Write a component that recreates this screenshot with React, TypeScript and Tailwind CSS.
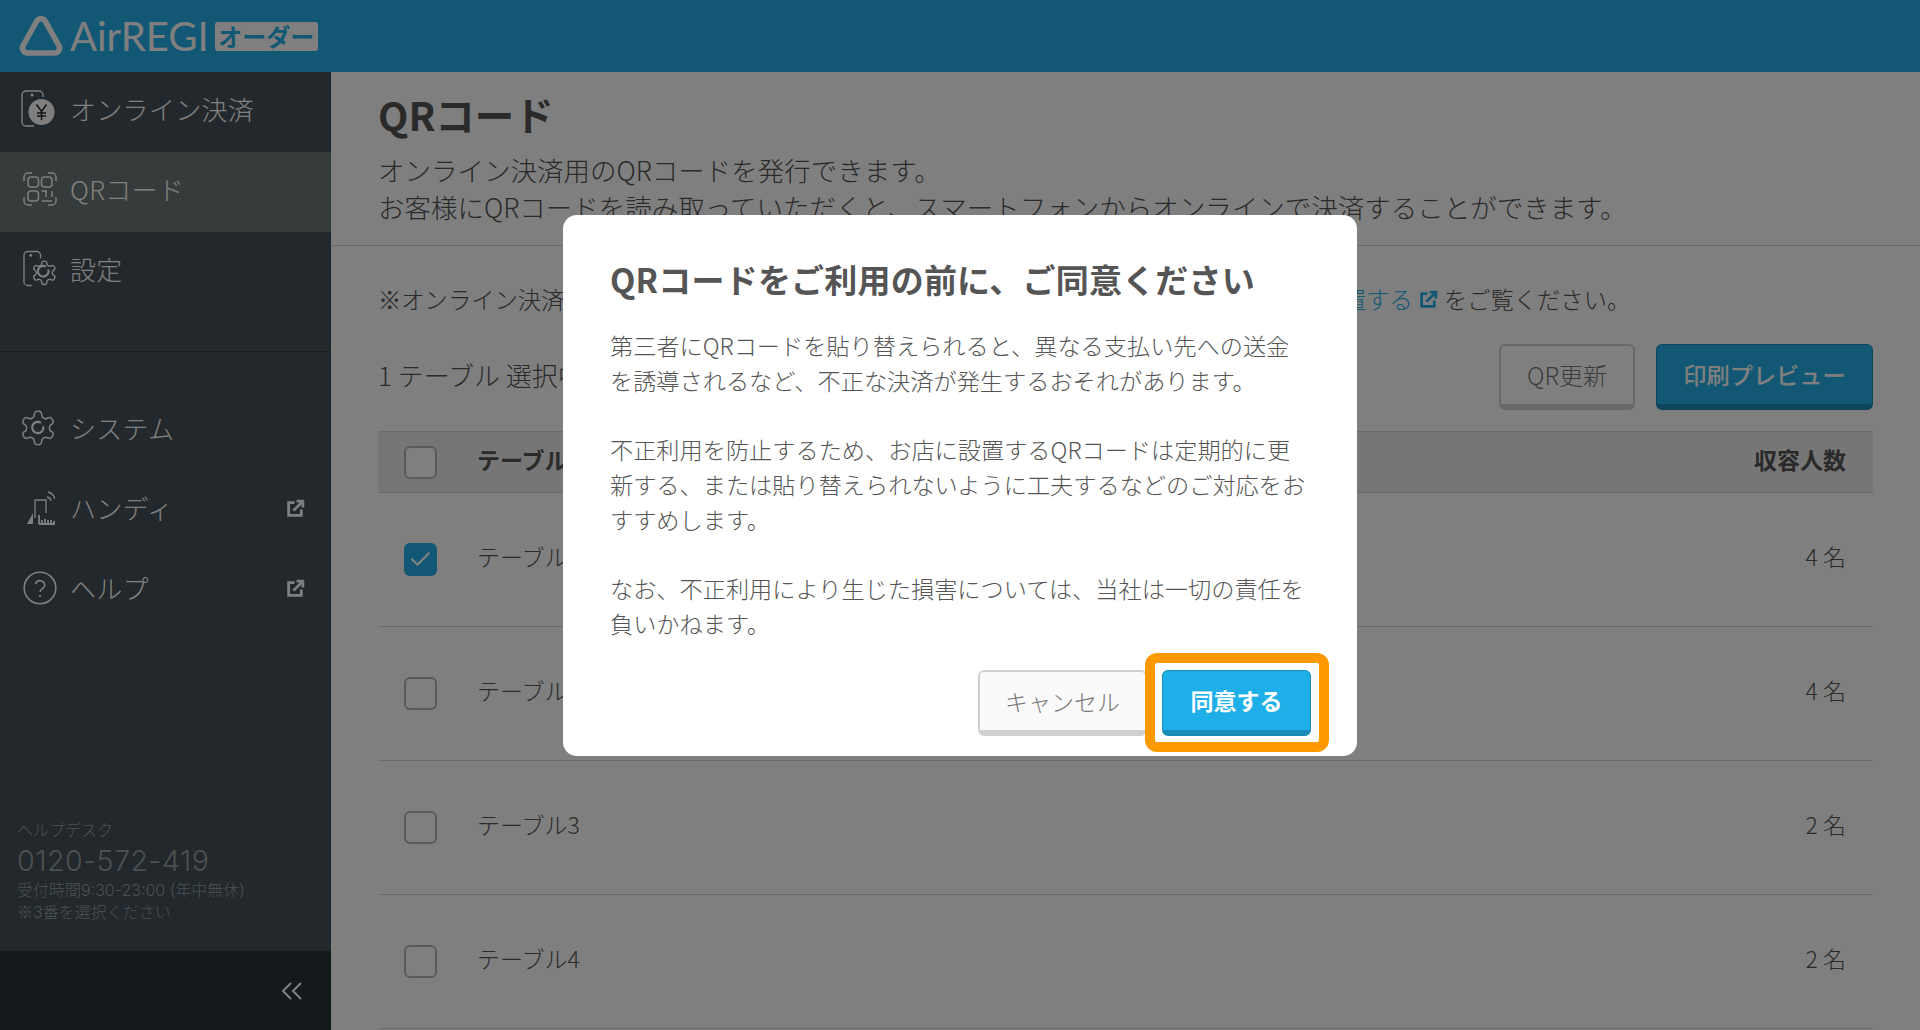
import React from "react";
import { Check } from "lucide-react";

const FONT = "font-['Noto_Sans_CJK_JP','Noto_Sans',sans-serif]";
const GEAR =
  "M12.22 2h-.44a2 2 0 0 0-2 2v.18a2 2 0 0 1-1 1.73l-.43.25a2 2 0 0 1-2 0l-.15-.08a2 2 0 0 0-2.73.73l-.22.38a2 2 0 0 0 .73 2.73l.15.1a2 2 0 0 1 1 1.72v.51a2 2 0 0 1-1 1.74l-.15.09a2 2 0 0 0-.73 2.73l.22.38a2 2 0 0 0 2.73.73l.15-.08a2 2 0 0 1 2 0l.43.25a2 2 0 0 1 1 1.73V20a2 2 0 0 0 2 2h.44a2 2 0 0 0 2-2v-.18a2 2 0 0 1 1-1.73l.43-.25a2 2 0 0 1 2 0l.15.08a2 2 0 0 0 2.73-.73l.22-.39a2 2 0 0 0-.73-2.73l-.15-.08a2 2 0 0 1-1-1.74v-.5a2 2 0 0 1 1-1.74l.15-.09a2 2 0 0 0 .73-2.73l-.22-.38a2 2 0 0 0-2.73-.73l-.15.08a2 2 0 0 1-2 0l-.43-.25a2 2 0 0 1-1-1.73V4a2 2 0 0 0-2-2z";

function Ext({ className = "" }: { className?: string }) {
  return (
    <svg viewBox="0 0 18 18" className={className} fill="none" stroke="currentColor" strokeWidth="2.6">
      <path d="M8 3.5H2.5v12h12V10" />
      <path d="M7 11 15 3" />
      <path d="M10 2h6v6" />
    </svg>
  );
}

function PhoneYen() {
  return (
    <svg viewBox="0 0 36 38" className="w-[36px] h-[38px]" fill="none" stroke="currentColor" strokeWidth="1.4">
      <path d="M14 36H6a4 4 0 0 1-4-4V5a4 4 0 0 1 4-4h13a4 4 0 0 1 4 4v2" />
      <circle cx="12" cy="5" r="0.8" fill="currentColor" />
      <circle cx="21.5" cy="22" r="13" fill="currentColor" stroke="none" />
      <path d="M16.5 14.5l5 7 5-7M21.5 21.5V30M17 23h9M17 26h9" stroke="#22282b" strokeWidth="1.5" />
    </svg>
  );
}

function QrIcon() {
  return (
    <svg viewBox="0 0 34 34" className="ml-[3px] w-[34px] h-[34px]" fill="none" stroke="currentColor" strokeWidth="1.5">
      <path d="M1 9V5a4 4 0 0 1 4-4h4M25 1h4a4 4 0 0 1 4 4v4M33 25v4a4 4 0 0 1-4 4h-4M9 33H5a4 4 0 0 1-4-4v-4" />
      <rect x="5" y="5" width="10.5" height="10" rx="3" />
      <rect x="18.5" y="5" width="10.5" height="10" rx="3" />
      <rect x="5" y="19" width="10.5" height="10" rx="3" />
      <path d="M18.5 19h4.5v6M29 19v6M18.5 29H29" />
    </svg>
  );
}

function PhoneGear() {
  return (
    <svg viewBox="0 0 36 38" className="ml-[3px] w-[36px] h-[38px]" fill="none" stroke="currentColor" strokeWidth="1.4">
      <path d="M9 36H5a4 4 0 0 1-4-4V5a4 4 0 0 1 4-4h9a4 4 0 0 1 4 4v3" />
      <circle cx="8" cy="5" r="0.8" fill="currentColor" />
      <path d={GEAR} transform="translate(7.5 8.5) scale(1.2)" strokeWidth="1.2" />
      <path d="M26 19.5a5.5 5.5 0 1 1-2.5-3" strokeWidth="2.2" />
    </svg>
  );
}

function GearIcon() {
  return (
    <svg viewBox="0 0 24 24" className="ml-[-2px] w-[40px] h-[40px]" fill="none" stroke="currentColor" strokeWidth="0.9">
      <path d={GEAR} />
      <path d="M15.2 11a3.4 3.4 0 1 1-1.4-2.1" strokeWidth="1.3" />
    </svg>
  );
}

function Handy() {
  return (
    <svg viewBox="0 0 28 34" className="ml-[7px] w-[28px] h-[34px]" fill="none" stroke="currentColor" strokeWidth="1.3">
      <path d="M0 33l6-11v11z" fill="currentColor" stroke="none" />
      <path d="M8 27V9h11v13" />
      <path d="M12 33V24M12 33h16M15 33v-4M18 33v-5M21 33v-4M24 33v-4M27 33v-3" strokeWidth="1.8" />
      <path d="M20 6a5 5 0 0 1 4 4M21 1a10 10 0 0 1 7 7" />
    </svg>
  );
}

function HelpIcon() {
  return (
    <svg viewBox="0 0 34 34" className="ml-[3px] w-[34px] h-[34px]" fill="none" stroke="currentColor" strokeWidth="1.6">
      <circle cx="17" cy="17" r="15.8" />
      <path d="M12.5 13a4.7 4.7 0 0 1 9.2 1.2c0 3.2-4.7 3.5-4.7 6.8" />
      <circle cx="17" cy="25.2" r="1.1" fill="currentColor" stroke="none" />
    </svg>
  );
}

function NavItem({ icon, label, active, ext }: { icon: React.ReactNode; label: string; active?: boolean; ext?: boolean }) {
  return (
    <div className={`flex items-center h-[80px] pl-[20px] pr-[26px] pb-[6px] ${active ? "bg-[#6c7878]" : ""}`}>
      <div className="w-[38px] flex justify-start shrink-0">{icon}</div>
      <span className="ml-[12px] text-[26px] font-light leading-none tracking-[0.3px] flex-1">{label}</span>
      {ext && <Ext className="w-[19px] h-[19px]" />}
    </div>
  );
}

function Box({ checked }: { checked?: boolean }) {
  return checked ? (
    <div className="w-[33px] h-[33px] rounded-[6px] bg-[#24b0e9] flex items-center justify-center text-white shrink-0">
      <Check size={25} strokeWidth={2.2} />
    </div>
  ) : (
    <div className="w-[33px] h-[33px] rounded-[6px] border-2 border-[#b4b4b4] bg-white shrink-0" />
  );
}

function Row({ name, n, checked }: { name: string; n: string; checked?: boolean }) {
  return (
    <div className="flex items-center h-[134px] border-b border-[#d4d4d4] pl-[26px] pr-[27px]">
      <Box checked={checked} />
      <span className="ml-[40px] text-[23px] pb-[6px] flex-1 font-light text-[#555]">{name}</span>
      <span className="text-[23px] pb-[6px] font-light text-[#555]">{n}</span>
    </div>
  );
}

export default function App() {
  return (
    <div className={`relative h-[1030px] w-[1920px] overflow-hidden bg-white flex flex-col ${FONT}`}>
      <header className="h-[72px] shrink-0 bg-[#24b0e9] flex items-center pl-[19px] text-white">
        <svg viewBox="0 0 44 40" className="w-[44px] h-[40px]" fill="none" stroke="currentColor" strokeWidth="5.6" strokeLinejoin="round">
          <path d="M17.5 5.5a5.2 5.2 0 0 1 9 0L39.5 29a5 5 0 0 1-4.4 8H8.9a5 5 0 0 1-4.4-8z" />
        </svg>
        <span className="ml-[7px] font-['Lato',sans-serif] text-[40px] leading-none">AirREGI</span>
        <span className="ml-[6px] w-[103px] h-[29px] rounded-[3px] bg-white text-[#24b0e9] font-bold text-[24px] leading-none flex items-center justify-center">オーダー</span>
      </header>
      <div className="flex flex-1 min-h-0">
        <aside className="w-[331px] shrink-0 bg-[#445056] text-white flex flex-col">
          <NavItem icon={<PhoneYen />} label="オンライン決済" />
          <NavItem icon={<QrIcon />} label="QRコード" active />
          <NavItem icon={<PhoneGear />} label="設定" />
          <div className="mt-[39px] border-t border-[#323c42] h-[40px]" />
          <NavItem icon={<GearIcon />} label="システム" />
          <NavItem icon={<Handy />} label="ハンディ" ext />
          <NavItem icon={<HelpIcon />} label="ヘルプ" ext />
          <div className="mt-auto pl-[17px] pb-[28px] text-[#96a0a6] font-light font-['Inter','Noto_Sans_CJK_JP',sans-serif]">
            <div className="text-[16px] leading-[24px] font-['Noto_Sans_CJK_JP',sans-serif]">ヘルプデスク</div>
            <div className="text-[28.6px] leading-[39px] tracking-[0.5px]">0120-572-419</div>
            <div className="text-[16px] leading-[21px]">受付時間9:30-23:00 (年中無休)</div>
            <div className="text-[16px] leading-[21px]"><span className="font-['Noto_Sans_CJK_JP',sans-serif]">※</span>3番を選択ください</div>
          </div>
          <div className="h-[79px] bg-[#283238] flex items-center justify-end pr-[29px] shrink-0">
            <svg viewBox="0 0 21 18" className="w-[21px] h-[18px]" fill="none" stroke="currentColor" strokeWidth="2">
              <path d="M10 1 2 9l8 8M20 1l-8 8 8 8" />
            </svg>
          </div>
        </aside>
        <main className="flex-1 min-w-0 text-[#555]">
          <div className="h-[174px] border-b border-[#d4d4d4] pl-[47px] pt-[19px]">
            <h1 className="text-[39.5px] leading-[46px] font-bold">QRコード</h1>
            <p className="mt-[14px] text-[26.5px] leading-[37px] font-light">
              オンライン決済用のQRコードを発行できます。
              <br />
              お客様にQRコードを読み取っていただくと、スマートフォンからオンラインで決済することができます。
            </p>
          </div>
          <div className="px-[47px]">
            <p className="mt-[37px] mb-[1px] text-[23.3px] leading-[32px] font-light whitespace-nowrap flex items-center">
              <span className="w-[965px] overflow-hidden shrink-0">※オンライン決済のご利用前に</span>
              <span className="text-[#24b0e9]">置する</span>
              <Ext className="w-[19px] h-[19px] text-[#24b0e9] mx-[6px]" />
              <span>をご覧ください。</span>
            </p>
            <div className="mt-[29px] flex items-start justify-between">
              <span className="mt-[13px] text-[26px] leading-[36px] font-light">1 テーブル 選択中</span>
              <div className="flex gap-[21px]">
                <button className="w-[136px] h-[66px] rounded-[6px] border-2 border-[#d0d0d0] border-b-[6px] bg-white text-[24px] font-light text-[#777]">QR更新</button>
                <button className="w-[217px] h-[66px] rounded-[6px] border border-[#1a8bb7] border-b-[6px] bg-[#24b0e9] text-white text-[23.2px] font-medium">印刷プレビュー</button>
              </div>
            </div>
            <div className="mt-[21px] h-[62px] flex items-center bg-[#ececec] border-y border-[#d4d4d4] pl-[26px] pr-[27px]">
              <Box />
              <span className="ml-[40px] text-[23px] pb-[6px] font-bold flex-1">テーブル名</span>
              <span className="text-[23px] pb-[6px] font-bold">収容人数</span>
            </div>
            <Row name="テーブル1" n="4 名" checked />
            <Row name="テーブル2" n="4 名" />
            <Row name="テーブル3" n="2 名" />
            <Row name="テーブル4" n="2 名" />
          </div>
        </main>
      </div>

      <div className="absolute inset-0 bg-black/50" />

      <div className="absolute left-[563px] top-[215px] w-[794px] h-[541px] bg-white rounded-[14px] pl-[47px] pr-[20px] pt-[41px] text-[#555]">
        <h2 className="text-[33px] leading-[46px] font-bold tracking-[0.2px]">QRコードをご利用の前に、ご同意ください</h2>
        <div className="mt-[26px] text-[23.2px] leading-[34.7px] font-light">
          <p>第三者にQRコードを貼り替えられると、異なる支払い先への送金<br />を誘導されるなど、不正な決済が発生するおそれがあります。</p>
          <p className="mt-[34.7px]">不正利用を防止するため、お店に設置するQRコードは定期的に更<br />新する、または貼り替えられないように工夫するなどのご対応をお<br />すすめします。</p>
          <p className="mt-[34.7px]">なお、不正利用により生じた損害については、当社は一切の責任を<br />負いかねます。</p>
        </div>
        <div className="absolute right-[46px] top-[455px] flex">
          <button className="w-[169px] h-[66px] rounded-[6px] border-2 border-[#d0d0d0] border-b-[6px] bg-[#fafafa] text-[23px] font-light text-[#777]">キャンセル</button>
          <button className="ml-[15px] w-[149px] h-[66px] rounded-[6px] border border-[#1a8bb7] border-b-[6px] bg-[#1fafe8] text-white text-[23px] font-bold">同意する</button>
        </div>
        <div className="absolute left-[582px] top-[438px] w-[184px] h-[99px] rounded-[12px] border-[10px] border-[#ff9900]" />
      </div>
    </div>
  );
}
